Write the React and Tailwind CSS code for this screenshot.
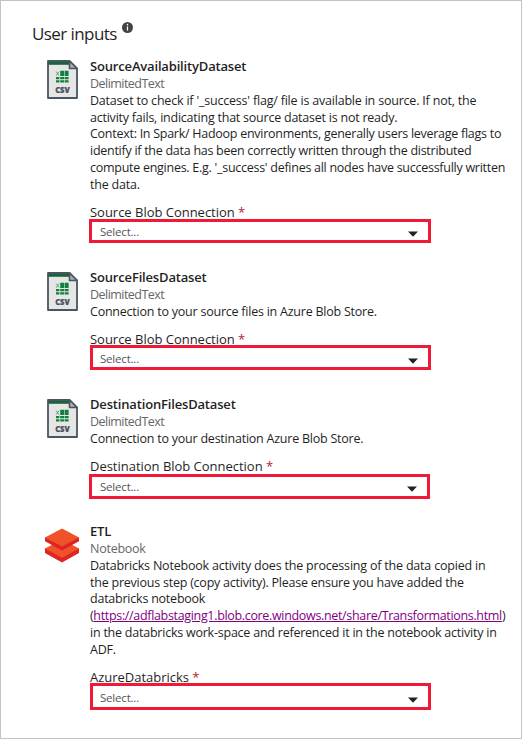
import React from "react";

function CsvIcon() {
  return (
    <svg width="31" height="39" viewBox="0 0 31 39" className="block">
      <path d="M1 1H22.5L30 8.5V38H1Z" fill="#e6e6e6" />
      <path d="M1 1H22.5V4.8H1Z" fill="#17653a" />
      <path d="M1 1H22.5L30 8.5V38H1Z" fill="none" stroke="#4b5561" strokeWidth="1.8" strokeLinejoin="round" />
      <path d="M22.5 1V8.5H30Z" fill="#a9afb6" stroke="#4b5561" strokeWidth="1.6" strokeLinejoin="round" />
      <path
        d="M13.2 10.8h3.8v5.2h-3.8zM17.6 10.8h4v5.2h-4zM9 17h3.4v2.3H9zM13.2 17h3.8v2.3h-3.8zM17.6 17h4v2.3h-4zM9 20.2h3.4v2.2H9zM13.2 20.2h3.8v2.2h-3.8zM17.6 20.2h4v2.2h-4z"
        fill="#10803c"
      />
      <path d="M9.2 11.6l2.8 4M12 11.6L9.2 15.6" stroke="#3f9a62" strokeWidth="0.9" />
      <text x="15.4" y="33" textAnchor="middle" textLength="14.5" lengthAdjust="spacingAndGlyphs" fontSize="8" fontWeight="800" fill="#48525d" stroke="#48525d" strokeWidth="0.2" fontFamily="Open Sans, sans-serif">CSV</text>
    </svg>
  );
}

function DatabricksIcon() {
  return (
    <svg width="34" height="35" viewBox="0 0 34 35" className="block">
      <path d="M0 20V25L17 34.5L34 25V20L17 28Z" fill="#de2424" />
      <path d="M0 20.4L17 11.4L34 20.4L17 29.8Z" fill="#f0522a" />
      <path d="M0 9V13.2L17 22.4L34 13.2V9L17 17Z" fill="#de2424" />
      <path d="M0 9.6L17 0.5L34 9.6L17 18.6Z" fill="#f0522a" />
    </svg>
  );
}

function Select({ className }) {
  return (
    <div className={`flex items-center justify-between border-[3px] border-[#f01a38] bg-white pr-[10px] ${className}`}>
      <span className="text-[11.5px] leading-4 tracking-[-0.2px] text-[#555]">Select...</span>
      <svg width="10" height="6" viewBox="0 0 10 6" className="mt-[4px]">
        <path d="M0 0.5H10L5 5.8Z" fill="#222" />
      </svg>
    </div>
  );
}

function Section({ className, icon, title, type, typeClass = "tracking-[-0.53px]", lines, label, labelClass, select }) {
  return (
    <section className={`flex ${className}`}>
      <div className="w-[45px] shrink-0">{icon}</div>
      <div className="whitespace-nowrap text-[12.5px] leading-[16.8px] tracking-[-0.23px]">
        <h2 className="mb-[2px] w-fit text-[13px] leading-[16px] font-semibold tracking-[-0.17px]">{title}</h2>
        <div className={`w-fit text-[#666] ${typeClass}`}>{type}</div>
        {lines.map((line, i) => (
          <div key={i} className="w-fit">{line}</div>
        ))}
        <div className={`mt-[10px] text-[13px] leading-[17px] tracking-[-0.02px] ${labelClass}`}>
          {label} <span className="text-[#b5202c]">*</span>
        </div>
        {select}
      </div>
    </section>
  );
}

export default function App() {
  return (
    <main className="h-[739px] w-[522px] overflow-hidden border border-[#c3c3c3] bg-white pl-[44px] font-['Open_Sans',sans-serif] text-[#1f1f1f]">
      <header className="-ml-[13px] flex h-[57px] whitespace-nowrap pt-[21px]">
        <h1 className="w-[85px] text-[17px] leading-6 font-medium tracking-[-0.58px]">User inputs</h1>
        <svg width="11" height="11" viewBox="0 0 10 10" className="ml-[5px]">
          <circle cx="5" cy="5" r="5" fill="#444" />
          <path d="M5 4V7.8" stroke="#fff" strokeWidth="1.1" fill="none" />
          <circle cx="5" cy="2.4" r="0.7" fill="#fff" />
        </svg>
      </header>
      <Section
        className="h-[211px]"
        icon={<div className="pt-[2px] pl-[2px]"><CsvIcon /></div>}
        title="SourceAvailabilityDataset"
        type="DelimitedText"
        lines={[
          <span className="tracking-[-0.2px]">Dataset to check if '_success' flag/ file is available in source. If not, the</span>,
          "activity fails, indicating that source dataset is not ready.",
          <span className="tracking-[-0.27px]">Context: In Spark/ Hadoop environments, generally users leverage flags to</span>,
          <span className="tracking-[-0.27px]">identify if the data has been correctly written through the distributed</span>,
          <span className="tracking-[-0.27px]">compute engines. E.g. '_success' defines all nodes have successfully written</span>,
          <span className="tracking-[-0.2px]">the data.</span>,
        ]}
        label="Source Blob Connection"
        labelClass="h-[15.4px]"
        select={<Select className="-ml-px h-[24px] w-[342px] pt-[2px] pl-[8px]" />}
      />
      <Section
        className="h-[127px]"
        icon={<div className="pt-[3px] pl-[2px]"><CsvIcon /></div>}
        title="SourceFilesDataset"
        type="DelimitedText"
        lines={["Connection to your source files in Azure Blob Store."]}
        label="Source Blob Connection"
        labelClass="h-[14.4px]"
        select={<Select className="h-[25px] w-[341px] pt-[3px] pl-[7px]" />}
      />
      <Section
        className="h-[127px]"
        icon={<div className="pt-[3px] pl-[2px]"><CsvIcon /></div>}
        title="DestinationFilesDataset"
        type="DelimitedText"
        lines={["Connection to your destination Azure Blob Store."]}
        label="Destination Blob Connection"
        labelClass="h-[16.4px]"
        select={<Select className="-ml-px h-[25px] w-[341px] pt-[1px] pl-[8px]" />}
      />
      <Section
        className="h-[200px]"
        icon={<div className="pt-[5px]"><DatabricksIcon /></div>}
        title="ETL"
        type="Notebook"
        typeClass="tracking-[-0.25px]"
        lines={[
          <span className="tracking-[-0.2px]">Databricks Notebook activity does the processing of the data copied in</span>,
          "the previous step (copy activity). Please ensure you have added the",
          "databricks notebook",
          <span className="tracking-[-0.33px]">(<a className="text-[#800080] underline">https://adflabstaging1.blob.core.windows.net/share/Transformations.html</a>)</span>,
          "in the databricks work-space and referenced it in the notebook activity in",
          "ADF.",
        ]}
        label="AzureDatabricks"
        labelClass="h-[14.4px]"
        select={<Select className="h-[27px] w-[341px] pt-[3px] pl-[7px]" />}
      />
    </main>
  );
}
